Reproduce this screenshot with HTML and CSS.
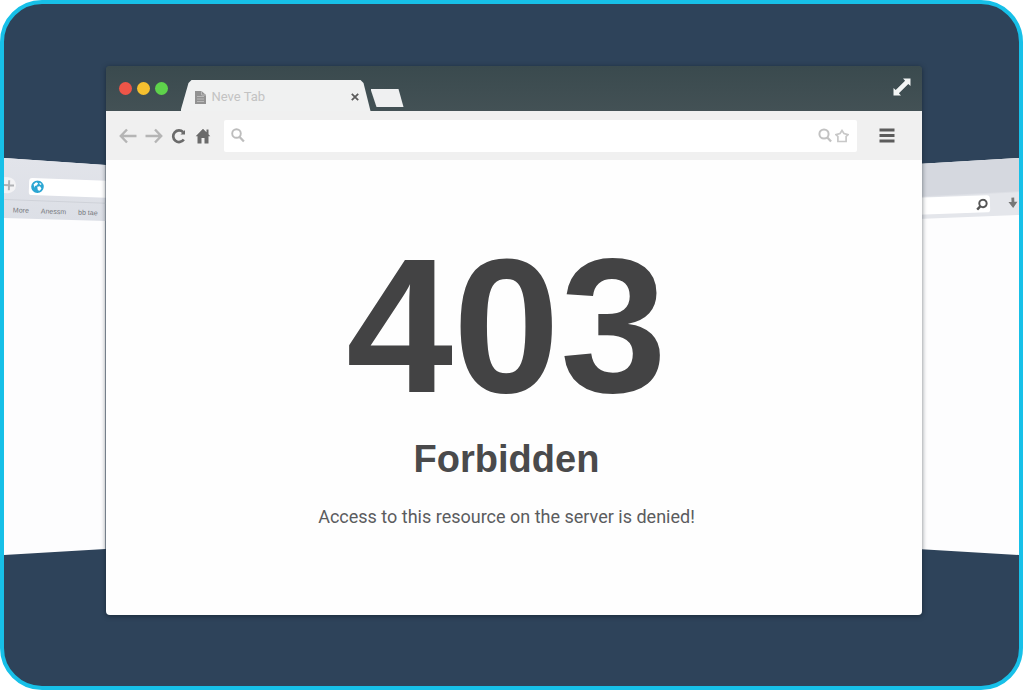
FILE: index.html
```html
<!DOCTYPE html>
<html lang="en">
<head>
    <meta charset="UTF-8">
    <meta name="viewport" content="width=device-width, initial-scale=1.0">
    <title>403 Forbidden</title>
    <link rel="stylesheet" href="styles.css">
</head>
<body>
    <div class="frame">
        <div class="side side-left">
            <div class="side-chrome">
                <div class="side-row">
                    <button class="side-btn plus" aria-label="New">
                        <svg width="14" height="14" viewBox="0 0 14 14"><path d="M7 2v10M2 7h10" stroke="#b0b2b5" stroke-width="2"/></svg>
                    </button>
                    <div class="side-address">
                        <svg width="13" height="13" viewBox="0 0 13 13"><circle cx="6.500" cy="6.500" r="6.300" fill="#2ba6d3"/><path d="M2.500 4.500L5 2l2 1-1 2-2 .8-.3 1.700zM6.300 6.500l2.700-.5 1.500 2-1.500 2.500-2-.5-.4-1.800zM8.500 2.300l2 1.300-.8 1-1.400-.8z" fill="#fff"/></svg>
                        <input type="text" aria-label="Left window address">
                    </div>
                </div>
                <div class="bookmarks">
                    <a href="#">More</a>
                    <a href="#">Anessm</a>
                    <a href="#">bb tae</a>
                </div>
            </div>
        </div>

        <div class="window">
            <div class="titlebar">
                <div class="lights">
                    <button class="light red" aria-label="Close window"></button>
                    <button class="light yellow" aria-label="Minimize"></button>
                    <button class="light green" aria-label="Maximize"></button>
                </div>
                <div class="tab">
                    <svg width="11" height="14" viewBox="0 0 11 14"><path d="M0 1h6.500L11 5v9H0z" fill="#929292"/><path d="M6.500 1v4H11M2 6.500h7M2 9h7M2 11.500h7" fill="none" stroke="#b9b9b9"/></svg>
                    <span class="tab-title">Neve Tab</span>
                    <button class="tab-close" aria-label="Close tab">
                        <svg width="8" height="8" viewBox="0 0 8 8"><path d="M.8.8l6.400 6.400M7.200.8L.8 7.200" stroke="#5c5c5c" stroke-width="1.800"/></svg>
                    </button>
                </div>
                <button class="new-tab" aria-label="New tab"></button>
                <button class="expand" aria-label="Full screen">
                    <svg width="18" height="18" viewBox="0 0 18 18"><path d="M10 .5h7.500V8l-2.200-2.100-9.400 9.400L8 17.500H.5V10l2.200 2.100 9.400-9.400z" fill="#f3f5f5"/></svg>
                </button>
            </div>

            <div class="toolbar">
                <div class="nav">
                    <button class="icon" aria-label="Back">
                        <svg width="18" height="16" viewBox="0 0 18 16"><path d="M17.500 8H2M8 1.500L1.800 8 8 14.500" fill="none" stroke="#b5b5b5" stroke-width="2.400"/></svg>
                    </button>
                    <button class="icon" aria-label="Forward">
                        <svg width="18" height="16" viewBox="0 0 18 16"><path d="M.5 8H16M10 1.500L16.200 8 10 14.500" fill="none" stroke="#b5b5b5" stroke-width="2.400"/></svg>
                    </button>
                    <button class="icon reload" aria-label="Reload">
                        <svg width="16" height="16" viewBox="0 0 16 16"><path d="M12.200 4.200A5.800 5.800 0 1 0 12.800 11.500" fill="none" stroke="#6b6b6b" stroke-width="2.700"/><path d="M14 2v4.500H9.500z" fill="#6b6b6b"/></svg>
                    </button>
                    <button class="icon" aria-label="Home">
                        <svg width="16" height="16" viewBox="0 0 16 16"><path d="M8 .8L.7 8.300h1.800V15.500h4V10h3v5.500h4V8.300h1.800L13.500 6.200V1.500h-2v2.700z" fill="#6b6b6b"/></svg>
                    </button>
                </div>
                <div class="address">
                    <svg width="14" height="15" viewBox="0 0 14 15"><circle cx="5.500" cy="5.500" r="4.300" fill="none" stroke="#bdbdbd" stroke-width="1.900"/><path d="M8.600 9l4.300 4.500" stroke="#bdbdbd" stroke-width="2.300"/></svg>
                    <input type="text" aria-label="Address">
                    <button class="icon" aria-label="Search">
                        <svg width="14" height="15" viewBox="0 0 14 15"><circle cx="6" cy="6" r="4.600" fill="none" stroke="#c2c2c2" stroke-width="2"/><path d="M9.300 9.500l3.800 4" stroke="#c2c2c2" stroke-width="2.300"/></svg>
                    </button>
                    <button class="icon" aria-label="Bookmark">
                        <svg width="14" height="14" viewBox="0 0 14 14"><path d="M7 1.500L9 4.500l4 1.200-1.900 1.800v5H2.900v-5L1 5.700l4-1.200z" fill="none" stroke="#c8c8c8" stroke-width="1.700"/></svg>
                    </button>
                </div>
                <button class="icon menu" aria-label="Menu">
                    <svg width="16" height="16" viewBox="0 0 16 16"><path d="M.5 2h15M.5 7.500h15M.5 13h15" stroke="#5c5c5c" stroke-width="3"/></svg>
                </button>
            </div>

            <main class="content">
                <h1>403</h1>
                <h2>Forbidden</h2>
                <p>Access to this resource on the server is denied!</p>
            </main>
        </div>

        <div class="side side-right">
            <div class="side-chrome">
                <div class="side-row">
                    <div class="side-address">
                        <input type="text" aria-label="Right window search">
                        <svg width="12" height="12" viewBox="0 0 12 12"><circle cx="7" cy="5" r="3.700" fill="none" stroke="#555" stroke-width="2"/><path d="M4.500 7.500L1 11" stroke="#555" stroke-width="2.500"/></svg>
                    </div>
                    <button class="side-btn" aria-label="Downloads">
                        <svg width="10" height="11" viewBox="0 0 10 11"><path d="M3.600 0h2.800v4.500H9.500L5 10.500.5 4.500h3.100z" fill="#777"/></svg>
                    </button>
                </div>
            </div>
        </div>
    </div>
</body>
</html>
```
FILE: styles.css
```css
* {
    box-sizing: border-box;
}
body {
    margin: 0;
    padding: 0 1px 1px 0;
    background: #fff;
    font-family: "Liberation Sans", Arial, sans-serif;
}
button {
    padding: 0;
    border: none;
    background: none;
    cursor: pointer;
}
input {
    min-width: 0;
    flex: 1;
    border: none;
    outline: none;
    background: transparent;
}
svg {
    display: block;
    flex-shrink: 0;
}

.frame {
    display: grid;
    grid-template-columns: minmax(0, 1fr) minmax(0, 8fr) minmax(0, 1fr);
    min-height: calc(100vh - 1px);
    padding: 62px 0 71px;
    border: 4px solid #17c0e8;
    border-radius: 42px;
    background: #2e435a;
    overflow: hidden;
}

/* windows behind */
.side {
    margin: 92px 0 60px;
    background: #fdfdfe;
    overflow: hidden;
}
.side-left {
    clip-path: polygon(0 0, 100% 7px, 100% calc(100% - 6px), 0 100%);
}
.side-right {
    clip-path: polygon(0 6px, 100% 0, 100% 100%, 0 calc(100% - 6px));
}
.side-chrome {
    height: 63px;
    background: linear-gradient(#e2e4ea, #dcdfe6);
}
.side-left .side-chrome {
    padding-top: 19px;
    clip-path: polygon(0 0, 100% 0, 100% 100%, 0 60px);
}
.side-right .side-chrome {
    height: 61px;
    padding-top: 38px;
    background: linear-gradient(177deg, #d5d8df 38px, #e4e6eb 40px);
    clip-path: polygon(0 0, 100% 0, 100% 57px, 0 100%);
}
.side-row {
    display: flex;
    align-items: center;
}
.side-left .side-row {
    gap: 13px;
    margin-right: -8px;
    transform: rotate(2deg);
}
.side-right .side-row {
    gap: 18px;
    margin-left: -4px;
    padding-right: 2px;
    transform: rotate(-2deg);
}
.side-address {
    display: flex;
    flex: 1;
    align-items: center;
    min-width: 0;
    height: 17px;
    padding: 0 2px;
    border-radius: 3px;
    background: #fff;
}
.side-left .side-address {
    margin-top: 2px;
}
.plus {
    width: 12px;
    height: 16px;
    border-radius: 0 8px 8px 0;
    background: #f3f3f5;
}
.plus svg {
    margin-left: -2px;
}
.bookmarks {
    display: flex;
    gap: 12px;
    margin: 5px -8px 0 0;
    padding: 4px 0 0 9px;
    border-top: 1px solid #cfd2d9;
    transform: rotate(2deg);
}
.bookmarks a {
    color: #77797e;
    font-size: 7px;
    line-height: 12px;
    text-decoration: none;
    white-space: nowrap;
}

/* main window, overlaps the right one a little */
.window {
    display: flex;
    flex-direction: column;
    position: relative;
    z-index: 1;
    margin-right: -4px;
    border-radius: 4px;
    background: linear-gradient(#3a4a4e 45px, #fefefe 45px);
    box-shadow: 0 1px 5px rgba(10, 20, 30, .55);
    overflow: hidden;
}
.titlebar {
    display: flex;
    align-items: flex-end;
    height: 45px;
    padding: 0 11px 0 13px;
    background: linear-gradient(#3a4a4e, #435155);
}
.lights {
    display: flex;
    gap: 5px;
    align-self: center;
    margin-right: 13px;
}
.light {
    width: 13px;
    height: 13px;
    border-radius: 50%;
}
.red {
    background: #ee5548;
}
.yellow {
    background: #f5c02f;
}
.green {
    background: #5ed24b;
}
.tab {
    display: flex;
    align-items: center;
    width: 190px;
    height: 31px;
    padding: 2px 12px 0 14px;
    background: #f0f1f1;
    clip-path: polygon(0 100%, 8px 3px, 11px 0, 180px 0, 183px 3px, 100% 100%);
}
.tab-title {
    flex: 1;
    margin-left: 6px;
    color: #c3c3c3;
    font-family: Roboto, sans-serif;
    font-size: 13px;
}
.new-tab {
    width: 33px;
    height: 18px;
    margin-bottom: 4px;
    background: #eff0f1;
    clip-path: polygon(0 0, 28px 0, 100% 100%, 6px 100%);
}
.expand {
    align-self: center;
    margin: 0 0 3px auto;
}
.toolbar {
    display: flex;
    align-items: center;
    height: 49px;
    padding: 0 27px 0 13px;
    background: #f0f0f0;
}
.nav {
    display: flex;
    align-items: center;
    gap: 8px;
    margin-right: 13px;
}
.address {
    display: flex;
    flex: 1;
    align-items: center;
    gap: 3px;
    height: 32px;
    padding: 0 8px 0 7px;
    border-radius: 2px;
    background: #fff;
}
.menu {
    margin-left: 22px;
}
.content {
    flex: 1;
    padding: 75px 34px 40px 20px;
    text-align: center;
}
h1 {
    margin: 0;
    color: #434344;
    font-size: 192px;
    line-height: 182px;
}
h2 {
    margin: 20px 0 0;
    color: #4a4a4b;
    font-size: 38px;
    line-height: 44px;
}
p {
    margin: 24px 0 0;
    color: #5b5c5e;
    font-family: Roboto, sans-serif;
    font-size: 18px;
    line-height: 24px;
}
```
